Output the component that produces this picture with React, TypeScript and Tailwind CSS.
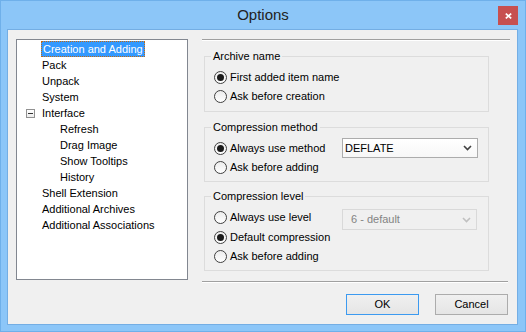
import React from 'react';

type TreeItem = { label: string; level: number; selected?: boolean; expander?: boolean };

const treeItems: TreeItem[] = [
  { label: 'Creation and Adding', level: 0, selected: true },
  { label: 'Pack', level: 0 },
  { label: 'Unpack', level: 0 },
  { label: 'System', level: 0 },
  { label: 'Interface', level: 0, expander: true },
  { label: 'Refresh', level: 1 },
  { label: 'Drag Image', level: 1 },
  { label: 'Show Tooltips', level: 1 },
  { label: 'History', level: 1 },
  { label: 'Shell Extension', level: 0 },
  { label: 'Additional Archives', level: 0 },
  { label: 'Additional Associations', level: 0 },
];

function Radio({ checked }: { checked?: boolean }) {
  return (
    <span className="flex h-[13px] w-[13px] shrink-0 items-center justify-center rounded-full border border-[#3f3f3f] bg-gradient-to-b from-[#ececec] to-white">
      {checked && <span className="h-[7px] w-[7px] rounded-full bg-[#1a1a1a]" />}
    </span>
  );
}

function Option({ label, checked, className }: { label: string; checked?: boolean; className?: string }) {
  return (
    <label className={`ml-[3px] flex items-center gap-[3px] ${className ?? ''}`}>
      <Radio checked={checked} />
      <span>{label}</span>
    </label>
  );
}

function Chevron({ color }: { color: string }) {
  return (
    <svg width="9" height="6" viewBox="0 0 9 6">
      <polyline points="1,1 4.5,4.5 8,1" fill="none" stroke={color} strokeWidth="1.6" />
    </svg>
  );
}

function Group({ title, children, className }: { title: string; children: React.ReactNode; className?: string }) {
  return (
    <fieldset className={`ml-[2px] w-[285px] border border-[#dcdcdc] pl-[6px] ${className ?? ''}`}>
      <legend className="px-[2px] leading-[15px]">{title}</legend>
      {children}
    </fieldset>
  );
}

export default function App() {
  return (
    <div className="flex h-[332px] w-[526px] flex-col border border-[#6fb0ea] bg-[#8cc6f8] font-['Liberation_Sans',Arial,sans-serif] text-[11px] text-black">
      {/* Title bar */}
      <div className="grid h-[28px] grid-cols-[1fr_auto_1fr]">
        <div />
        <div className="self-center text-[15px] text-[#222]">Options</div>
        <div className="flex justify-end">
          <button className="mr-[7px] mt-[5px] flex h-[19px] w-[20px] items-center justify-center bg-[#c75050]">
            <svg width="7" height="6" viewBox="0 0 7 6">
              <path d="M0.8 0.6 L6.2 5.4 M6.2 0.6 L0.8 5.4" stroke="#fff" strokeWidth="1.7" />
            </svg>
          </button>
        </div>
      </div>

      {/* Client area */}
      <div className="ml-[6px] flex h-[296px] w-[511px] border border-[#74aee4] bg-[#f0f0f0]">
        {/* Tree */}
        <div className="ml-[8px] mt-[9px] h-[241px] w-[172px] border border-[#828790] bg-white pt-[1px]">
          {treeItems.map((item) => (
            <div
              key={item.label}
              className={`flex h-[16px] items-center ${item.expander ? 'pl-[9px]' : item.level ? 'pl-[42px]' : 'pl-[24px]'}`}
            >
              {item.expander && (
                <span className="mr-[6px] flex h-[9px] w-[9px] items-center justify-center border border-[#919191] bg-gradient-to-b from-white to-[#ececec]">
                  <span className="h-[1px] w-[5px] bg-[#333]" />
                </span>
              )}
              <span
                className={
                  item.selected
                    ? 'flex h-[16px] items-center border border-dotted border-[#c46a10] bg-[#3399ff] px-[1px] text-white'
                    : 'px-[1px]'
                }
              >
                {item.label}
              </span>
            </div>
          ))}
        </div>

        {/* Settings */}
        <div className="ml-[14px] flex flex-col pt-[9px]">
          <div className="h-[2px] w-[308px] border-t border-b border-t-[#a0a0a0] border-b-white" />

          <Group title="Archive name" className="mt-[8px] pt-[4px] pb-[5px]">
            <Option label="First added item name" checked className="h-[19px]" />
            <Option label="Ask before creation" className="h-[19px]" />
          </Group>

          <Group title="Compression method" className="mt-[8px] pt-[3px] pb-[4px]">
            <div className="flex h-[20px] items-center">
              <Option label="Always use method" checked className="w-[128px]" />
              <div className="flex h-[20px] w-[136px] items-center justify-between border border-[#acacac] bg-gradient-to-b from-white to-[#f7f7f7] pl-[2px] pr-[5px]">
                <span>DEFLATE</span>
                <Chevron color="#404040" />
              </div>
            </div>
            <Option label="Ask before adding" className="h-[19px]" />
          </Group>

          <Group title="Compression level" className="mt-[7px] pt-[3px] pb-[4px]">
            <div className="flex h-[20px] items-start">
              <Option label="Always use level" className="h-[20px] w-[128px]" />
              <div className="mt-[2px] flex h-[21px] w-[135px] shrink-0 items-center justify-between border border-[#d9d9d9] bg-[#f0f0f0] pl-[8px] pr-[5px] text-[#838383]">
                <span>6 - default</span>
                <Chevron color="#c0c0c0" />
              </div>
            </div>
            <Option label="Default compression" checked className="h-[20px]" />
            <Option label="Ask before adding" className="h-[19px]" />
          </Group>

          <div className="mt-[10px] h-[2px] w-[306px] border-t border-b border-t-[#a0a0a0] border-b-white" />

          <div className="mt-[11px] flex w-[306px] justify-end gap-[16px]">
            <button className="h-[21px] w-[73px] border border-[#3c9af0] bg-gradient-to-b from-[#f0f0f0] to-[#e5e5e5]">
              OK
            </button>
            <button className="h-[21px] w-[73px] border border-[#acacac] bg-gradient-to-b from-[#f0f0f0] to-[#e5e5e5]">
              Cancel
            </button>
          </div>
        </div>
      </div>
    </div>
  );
}
